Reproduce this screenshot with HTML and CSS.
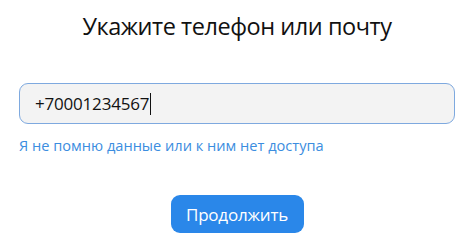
FILE: index.html
```html
<!DOCTYPE html>
<html lang="ru">
<head>
    <meta charset="UTF-8">
    <meta name="viewport" content="width=device-width, initial-scale=1.0">
    <title>Вход</title>
    <link rel="stylesheet" href="styles.css">
</head>
<body>
    <div class="container">
        <h1>Укажите телефон или почту</h1>

        <div class="field">
            <span class="value">+70001234567</span><span class="caret"></span>
        </div>

        <a class="help" href="#">Я не помню данные или к ним нет доступа</a>

        <div class="actions">
            <button>Продолжить</button>
        </div>
    </div>
</body>
</html>
```

FILE: styles.css
```css
body {
    font-family: "Open Sans", "Noto Sans", sans-serif;
    margin: 0;
    background: white;
    color: #111;
}
.container {
    padding: 0 19px;
}
h1 {
    font-size: 23.5px;
    font-weight: 400;
    line-height: 32px;
    letter-spacing: -0.45px;
    text-align: center;
    margin: 10px 0 0;
    color: #111;
}
.field {
    display: flex;
    align-items: center;
    margin-top: 41px;
    height: 41px;
    box-sizing: border-box;
    padding: 0 15px;
    border: 1px solid #7ea9df;
    border-radius: 9px;
    background: #f3f3f3;
    font-size: 17px;
    letter-spacing: -0.2px;
}
.caret {
    display: inline-block;
    width: 1px;
    height: 22px;
    background: #111;
    margin-left: 1px;
}
.help {
    display: block;
    margin-top: 11px;
    font-size: 14.6px;
    line-height: 20px;
    color: #3b8de0;
    text-decoration: none;
}
.actions {
    display: flex;
    justify-content: center;
    margin-top: 40px;
}
button {
    width: 133px;
    height: 38px;
    border: none;
    border-radius: 9px;
    background: #2a87e9;
    color: white;
    font-family: inherit;
    font-size: 17px;
    letter-spacing: -0.2px;
}
```
